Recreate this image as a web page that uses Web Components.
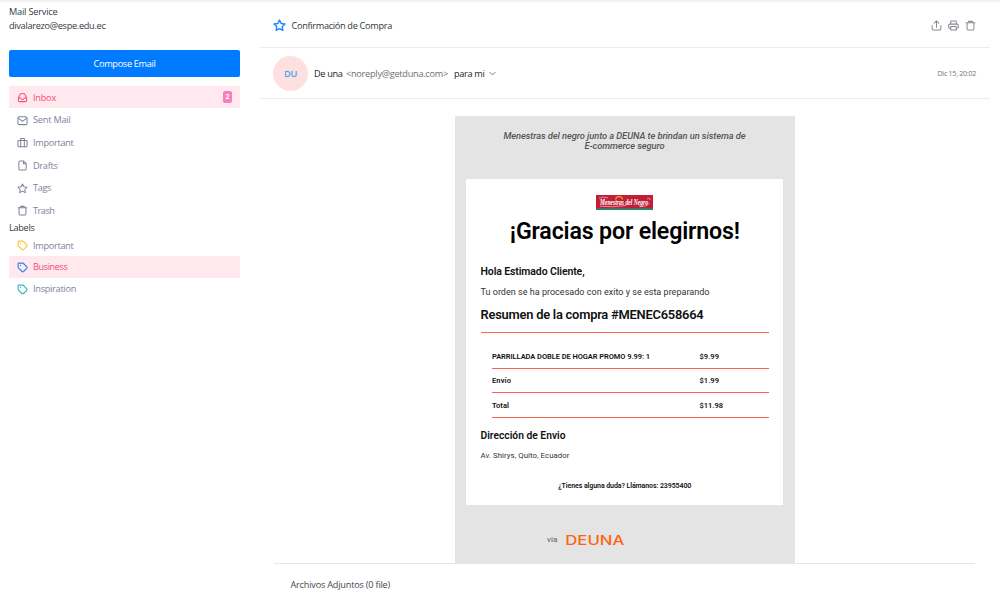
<!DOCTYPE html>
<html lang="es">
<head>
<meta charset="utf-8">
<title>Mail Service</title>
<style>
html,body{margin:0;height:100%;overflow:hidden;background:#fff}
body{font-family:"Open Sans","Noto Sans",sans-serif;font-size:9.200px}
</style>
</head>
<body>
<mail-app></mail-app>
<script>
const define = (name, html, setup) => {
  const tpl = document.createElement('template');
  tpl.innerHTML = html;
  customElements.define(name, class extends HTMLElement {
    connectedCallback() {
      if (this.shadowRoot) return;
      this.attachShadow({mode: 'open'}).appendChild(tpl.content.cloneNode(true));
      if (setup) setup(this, this.shadowRoot);
    }
  });
};

/* One line of text whose tracking is adjusted to a given width (w). */
define('fit-text', `<style>:host{display:block;white-space:nowrap;width:max-content}span{display:inline-block}</style><span><slot></slot></span>`,
  (host, root) => {
    const span = root.querySelector('span');
    const w = parseFloat(host.getAttribute('w'));
    const n = host.textContent.length;
    if (w && n) {
      const gap = (w - span.getBoundingClientRect().width) / n;
      span.style.letterSpacing = gap.toFixed(3) + 'px';
    }
  });

const ICONS = {
  inbox: '<path d="M3 13 6 6.500Q7 4 9 4h6q2 0 3 2.500L21 13v5q0 3-3 3H6q-3 0-3-3zM3 13h4.500q1 0 1.500 2 .5 1.500 3 1.500t3-1.500q.5-2 1.500-2H21"/>',
  mail: '<rect x="2" y="4" width="20" height="17" rx="3"/><path d="m3 7 9 7 9-7"/>',
  briefcase: '<rect x="2" y="7.500" width="20" height="14" rx="2"/><path d="M8 7V3.500h8V7M8 8v13M16 8v13"/>',
  file: '<path d="M14 2H7Q4 2 4 5v14q0 3 3 3h10q3 0 3-3V8zM14 2v6h6"/>',
  star: '<path d="m12 2 3.100 6.300 6.900 1-5 4.900 1.200 6.900L12 17.800l-6.200 3.300L7 14.200 2 9.300l6.900-1z"/>',
  trash: '<path d="M2.500 6h19M8 6V3h8v3M4.500 6v13q0 3 3 3h9q3 0 3-3V6"/>',
  tag: '<path d="M4 2.500h8.500q1 0 1.800.8l6.900 7.200q1.500 1.700 0 3.300l-6.900 6.900q-1.600 1.300-3.200 0L3.300 13.500Q2.500 12.700 2.500 11.500V4q0-1.500 1.500-1.500z"/><path d="M7.500 7.500h.1"/>',
  share: '<path d="M2.500 12v7q0 3 3 3h13q3 0 3-3v-7M12 16V2.500M7 7l5-5 5 5"/>',
  printer: '<path d="M6 9V2h12v7M6 18H4q-2.500 0-2.500-2.500v-4Q1.500 9 4 9h16q2.500 0 2.500 2.500v4Q22.500 18 20 18h-2"/><path d="M6 14h12v8H6z"/>',
  chevron: '<path d="m3 8 9 9 9-9"/>'
};
define('ui-icon', `<style>:host{display:block;flex:none;width:11px;height:11px}svg{display:block;width:100%;height:100%;fill:none;stroke:currentColor;stroke-width:var(--stroke,2.200);stroke-linecap:round;stroke-linejoin:round}</style><svg viewBox="0 0 24 24"></svg>`,
  (host, root) => { root.querySelector('svg').innerHTML = ICONS[host.getAttribute('name')]; });

define('nav-item', `<style>
:host{display:flex;align-items:center;height:22px;padding:0 8px 0 7.500px;color:#7d839b;box-sizing:border-box}
:host([active]){background:#ffe9ef;color:#f74b75}
ui-icon{margin-right:5.500px;color:var(--icon,currentColor);position:relative;top:.5px}
slot[name=badge]{display:block;margin-left:auto}
</style><ui-icon></ui-icon><slot></slot><slot name="badge"></slot>`,
  (host, root) => {
    const old = root.querySelector('ui-icon');
    const icon = document.createElement('ui-icon');
    icon.setAttribute('name', host.getAttribute('icon'));
    old.replaceWith(icon);
  });

define('count-badge', `<style>:host{display:grid;place-items:center;width:9px;height:12px;border-radius:2px;background:#f77eb9;color:#fff;font-size:7px;font-weight:700;line-height:12px;margin-left:auto}</style><slot></slot>`);

define('mail-sidebar', `<style>
:host{display:block;padding:2px 0 0 9px;width:231px;color:#343a42}
.id{height:13.500px;line-height:13.500px}
.btn{display:flex;align-items:center;justify-content:center;height:27px;margin:18px 0 9px;border-radius:2px;background:#007bff;color:#fff}
nav{display:flex;flex-direction:column;gap:.7px}
.cap{height:13px;line-height:14px}
nav.tags{gap:0}
nav.tags nav-item{height:21.700px;--stroke:2.500}
</style>
<div class="id"><fit-text w="48.500">Mail Service</fit-text></div>
<div class="id"><fit-text w="96.500">divalarezo@espe.edu.ec</fit-text></div>
<div class="btn"><fit-text w="62">Compose Email</fit-text></div>
<nav>
<nav-item icon="inbox" active><fit-text w="23">Inbox</fit-text><count-badge slot="badge">2</count-badge></nav-item>
<nav-item icon="mail"><fit-text w="37.500">Sent Mail</fit-text></nav-item>
<nav-item icon="briefcase"><fit-text w="40.500">Important</fit-text></nav-item>
<nav-item icon="file"><fit-text w="24.500">Drafts</fit-text></nav-item>
<nav-item icon="star"><fit-text w="18">Tags</fit-text></nav-item>
<nav-item icon="trash"><fit-text w="21.500">Trash</fit-text></nav-item>
</nav>
<div class="cap"><fit-text w="25.500">Labels</fit-text></div>
<nav class="tags">
<nav-item icon="tag" style="--icon:#ffc53d"><fit-text w="40.500">Important</fit-text></nav-item>
<nav-item icon="tag" active style="--icon:#2f80f5"><fit-text w="34.500">Business</fit-text></nav-item>
<nav-item icon="tag" style="--icon:#35b3c5"><fit-text w="43">Inspiration</fit-text></nav-item>
</nav>`);

define('mail-toolbar', `<style>
:host{display:flex;align-items:center;height:45px;padding:1px 14px 0 14px;border-bottom:1px solid #ebedf3;color:#30353d;box-sizing:border-box}
.star{width:13px;height:13px;color:#1687ff;margin-right:5.500px;--stroke:2.600}
.acts{display:flex;gap:6px;margin-left:auto;color:#858b92}
</style><ui-icon class="star" name="star"></ui-icon><fit-text w="100.500">Confirmación de Compra</fit-text>
<div class="acts"><ui-icon name="share"></ui-icon><ui-icon name="printer"></ui-icon><ui-icon name="trash"></ui-icon></div>`);

define('mail-sender', `<style>
:host{display:flex;align-items:center;height:51px;padding:0 14px;border-bottom:1px solid #ebedf3;color:#22262c;box-sizing:border-box}
.av{display:grid;place-items:center;width:35px;height:35px;border-radius:50%;background:#ffe0e0;color:#45a5f2;font-weight:600;margin-right:6px}
.addr{color:#6b7077;margin:0 6px 0 3.500px}
.chev{width:7px;height:7px;margin-left:5px;color:#666c74;--stroke:3}
.date{margin-left:auto;font-size:7px;color:#6f747c}
</style><div class="av"><fit-text w="13">DU</fit-text></div>
<fit-text w="28.500">De una</fit-text><fit-text class="addr" w="102">&lt;noreply@getduna.com&gt;</fit-text><fit-text w="30.500">para mi</fit-text><ui-icon class="chev" name="chevron"></ui-icon>
<fit-text class="date" w="38.500">Dic 15, 20:02</fit-text>`);

define('order-row', `<style>:host{display:grid;grid-template-columns:207.500px 1fr;align-items:center;height:24.600px;border-bottom:1px solid #f4694c;box-sizing:border-box;font-size:7.500px;font-weight:600}</style><slot></slot>`);

define('store-logo', `<style>:host{display:block;width:57px;height:15px}svg{display:block;overflow:visible}text{font:italic 700 8px "Liberation Serif",serif}</style>
<svg width="57" height="15" viewBox="0 0 57 15"><rect width="57" height="15" fill="#c11f38"/><rect y="13.200" width="57" height="1.800" fill="#258568"/><path d="M19.500 4.500q1-3.200 3.500-2.800 2.400-.5 3.600 2.800" fill="none" stroke="#f39b27" stroke-width="1.200"/><path d="M3 3.300q4-2 9-.5M4 11.200q12 1.400 26-.7M43 11q7 1.500 10.500-3M51 4q3-2 3 1" fill="none" stroke="#f4d5da" stroke-width=".6"/><text x="4" y="9.500" fill="#fff" textLength="48" lengthAdjust="spacingAndGlyphs">Menestras del Negro</text></svg>`);

define('deuna-logo', `<style>:host{display:block;width:58px;height:12px}svg{display:block;overflow:visible}text{font:500 12.800px "Inter",sans-serif}</style>
<svg width="58" height="12" viewBox="0 0 58 12"><text x="-.7" y="10.700" fill="#fb6514" textLength="59" lengthAdjust="spacingAndGlyphs">DEUNA</text></svg>`);

define('mail-receipt', `<style>
:host{display:block;width:340px;height:447.500px;background:#e4e4e4;padding:0 12px 0 11px;box-sizing:border-box;font-family:Roboto,sans-serif;color:#111;overflow:hidden}
.quote{height:63px;padding-top:15.500px;box-sizing:border-box;display:flex;flex-direction:column;align-items:center;font-size:9.300px;line-height:10px;font-style:italic;font-weight:500;color:#555}
.card{height:326.500px;background:#fff;padding:16.500px 14px 0 14.500px;box-sizing:border-box}
.mid{display:flex;justify-content:center;align-items:center}
.row{display:flex;align-items:center}
.h1{height:42px;font-size:23.200px;font-weight:600;color:#000}
.hi{height:38px;font-size:10.500px;font-weight:600}
.p{height:3px;font-size:9px;color:#333}
.h2{height:39px;padding-top:3px;box-sizing:border-box;font-size:12.900px;font-weight:600}
.list{border-top:1px solid #f4694c;padding:11.300px 0 0 11.500px}
.h3{height:34px;font-size:10.300px;font-weight:600}
.ad{height:7px;font-size:7.800px;color:#333}
.help{height:53px;font-size:7px;font-weight:600}
.via{height:69px;gap:8.500px;padding-right:78px;box-sizing:border-box;font-size:8px;color:#58606a}
</style>
<div class="quote"><fit-text w="242">Menestras del negro junto a DEUNA te brindan un sistema de</fit-text><fit-text w="80">E-commerce seguro</fit-text></div>
<div class="card">
<div class="mid"><store-logo></store-logo></div>
<div class="mid h1"><fit-text w="230">¡Gracias por elegirnos!</fit-text></div>
<div class="row hi"><fit-text w="104">Hola Estimado Cliente,</fit-text></div>
<div class="row p"><fit-text w="229">Tu orden se ha procesado con exito y se esta preparando</fit-text></div>
<div class="row h2"><fit-text w="223">Resumen de la compra #MENEC658664</fit-text></div>
<div class="list">
<order-row><fit-text w="158">PARRILLADA DOBLE DE HOGAR PROMO 9.99: 1</fit-text><fit-text w="19.500">$9.99</fit-text></order-row>
<order-row><fit-text w="19">Envío</fit-text><fit-text w="19.500">$1.99</fit-text></order-row>
<order-row><fit-text w="17">Total</fit-text><fit-text w="23.500">$11.98</fit-text></order-row>
</div>
<div class="row h3"><fit-text w="85">Dirección de Envio</fit-text></div>
<div class="row ad"><fit-text w="89">Av. Shirys, Quito, Ecuador</fit-text></div>
<div class="mid help"><fit-text w="133">¿Tienes alguna duda? Llámanos: 23955400</fit-text></div>
</div>
<div class="mid via"><fit-text w="10.500">via</fit-text><deuna-logo></deuna-logo></div>`);

define('mail-app', `<style>
:host{display:grid;grid-template-columns:259px 731px;width:1000px;height:612px;box-sizing:border-box;border-top:2px solid #f1f1f1;padding-top:1px;background:#fff}
.body{margin:0 15px;border-bottom:1px solid #e4e6ea;padding:16.500px 0 0 181px;height:464.500px;box-sizing:border-box}
.files{padding:14px 0 0 31.500px;line-height:13px;color:#454a51}
</style>
<mail-sidebar></mail-sidebar>
<main><mail-toolbar></mail-toolbar><mail-sender></mail-sender>
<div class="body"><mail-receipt></mail-receipt></div>
<div class="files"><fit-text w="99.500">Archivos Adjuntos (0 file)</fit-text></div></main>`);
</script>
</body>
</html>
